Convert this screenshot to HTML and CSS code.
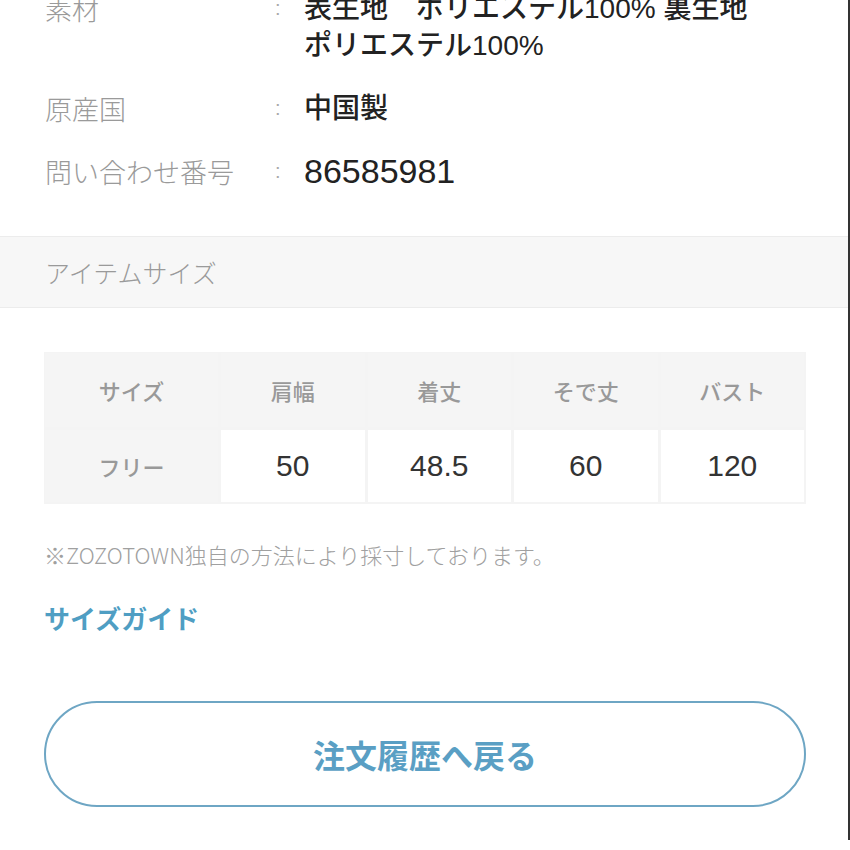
FILE: index.html
```html
<!DOCTYPE html>
<html lang="ja">
<head>
    <meta charset="UTF-8">
    <meta name="viewport" content="width=device-width, initial-scale=1.0">
    <title>アイテム詳細</title>
    <link rel="stylesheet" href="styles.css">
</head>
<body>
    <div class="page">
        <div class="spec-list">
            <div class="spec-row">
                <div class="spec-label">素材</div>
                <div class="spec-colon">:</div>
                <div class="spec-value">表生地　ポリエステル100% 裏生地<br>ポリエステル100%</div>
            </div>
            <div class="spec-row">
                <div class="spec-label">原産国</div>
                <div class="spec-colon">:</div>
                <div class="spec-value">中国製</div>
            </div>
            <div class="spec-row">
                <div class="spec-label">問い合わせ番号</div>
                <div class="spec-colon">:</div>
                <div class="spec-value number">86585981</div>
            </div>
        </div>

        <div class="section-head">アイテムサイズ</div>

        <div class="size-area">
            <div class="size-table">
                <div class="cell head">サイズ</div>
                <div class="cell head">肩幅</div>
                <div class="cell head">着丈</div>
                <div class="cell head">そで丈</div>
                <div class="cell head">バスト</div>
                <div class="cell head">フリー</div>
                <div class="cell val">50</div>
                <div class="cell val">48.5</div>
                <div class="cell val">60</div>
                <div class="cell val">120</div>
            </div>
            <p class="size-note">※ZOZOTOWN独自の方法により採寸しております。</p>
            <a class="size-guide" href="#">サイズガイド</a>
            <a class="back-btn" href="#">注文履歴へ戻る</a>
        </div>
    </div>
</body>
</html>
```

FILE: styles.css
```css
body {
    margin: 0;
    padding: 0;
    background: #fff;
    font-family: "Liberation Sans", "Noto Sans CJK JP", sans-serif;
    color: #222;
    overflow: hidden;
}
.page {
    width: 848px;
    border-right: 2px solid #333;
    min-height: 850px;
}
.spec-list {
    margin-top: -10px;
    padding: 0 45px 46px;
}
.spec-row {
    display: flex;
    line-height: 37px;
    margin-bottom: 26px;
}
.spec-row:last-child {
    margin-bottom: 0;
}
.spec-label {
    width: 230px;
    font-size: 27px;
    color: #9a9a9a;
    font-family: "Noto Sans CJK JP", sans-serif;
    font-weight: 300;
}
.spec-colon {
    width: 29px;
    font-size: 20px;
    color: #aaa;
}
.spec-value {
    font-size: 28px;
    font-weight: 500;
    color: #222;
}
.spec-value.number {
    font-size: 34px;
    font-weight: 400;
}
.section-head {
    height: 70px;
    line-height: 70px;
    background: #f7f7f7;
    border-top: 1px solid #ececec;
    border-bottom: 1px solid #ececec;
    padding-left: 45px;
    font-size: 25px;
    color: #9a9a9a;
    font-family: "Noto Sans CJK JP", sans-serif;
    font-weight: 300;
}
.size-area {
    padding: 44px 42px 0 44px;
}
.size-table {
    display: grid;
    grid-template-columns: 173px repeat(4, 1fr);
    grid-template-rows: 74px 72px;
    gap: 3px;
    padding: 1px 2px 2px 1px;
    background: #f4f4f4;
}
.cell {
    display: flex;
    align-items: center;
    justify-content: center;
}
.cell.head {
    background: #f5f5f5;
    color: #999;
    font-size: 22px;
    font-family: "Noto Sans CJK JP", sans-serif;
    font-weight: 500;
}
.cell.val {
    background: #fff;
    color: #333;
    font-size: 30px;
}
.size-note {
    margin: 36px 0 0;
    font-size: 22px;
    line-height: 28px;
    color: #a0a0a0;
    font-family: "Noto Sans CJK JP", sans-serif;
    font-weight: 300;
}
.size-guide {
    display: block;
    margin-top: 33px;
    font-size: 26px;
    line-height: 34px;
    font-weight: 700;
    color: #4f9ec3;
    text-decoration: none;
    font-family: "Noto Sans CJK JP", sans-serif;
}
.back-btn {
    display: flex;
    align-items: center;
    justify-content: center;
    margin-top: 66px;
    height: 102px;
    border: 2px solid #6ea6c4;
    border-radius: 53px;
    font-size: 32px;
    font-weight: 700;
    color: #5a9fc4;
    text-decoration: none;
    font-family: "Noto Sans CJK JP", sans-serif;
}
```
